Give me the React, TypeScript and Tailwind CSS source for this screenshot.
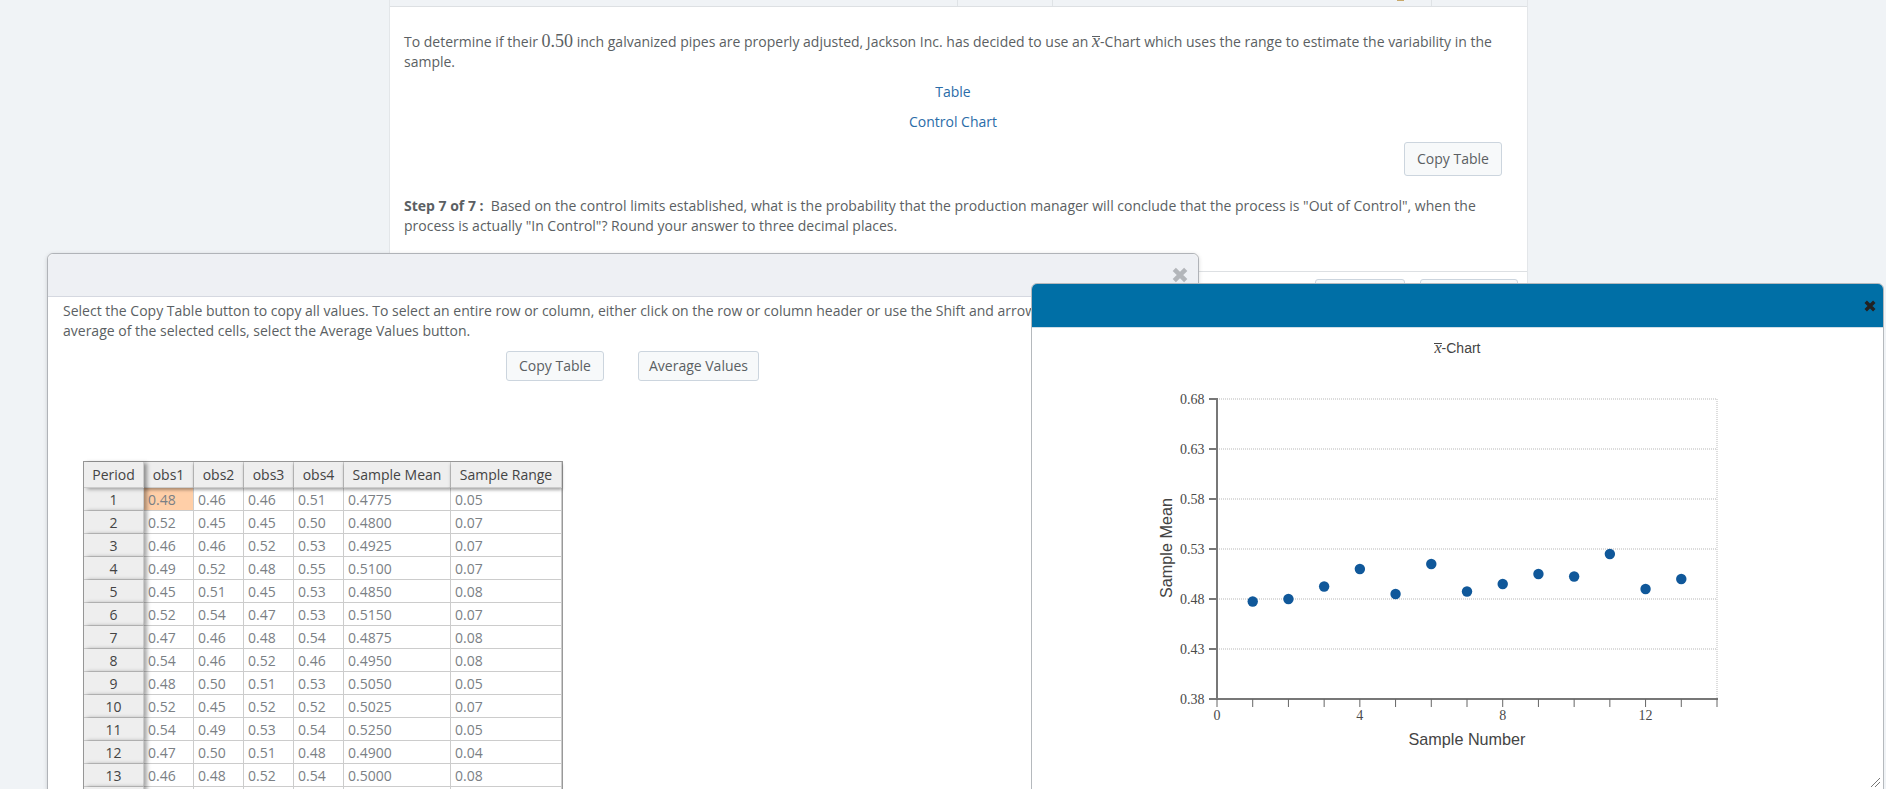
const rows = [
  ["1", "0.48", "0.46", "0.46", "0.51", "0.4775", "0.05"],
  ["2", "0.52", "0.45", "0.45", "0.50", "0.4800", "0.07"],
  ["3", "0.46", "0.46", "0.52", "0.53", "0.4925", "0.07"],
  ["4", "0.49", "0.52", "0.48", "0.55", "0.5100", "0.07"],
  ["5", "0.45", "0.51", "0.45", "0.53", "0.4850", "0.08"],
  ["6", "0.52", "0.54", "0.47", "0.53", "0.5150", "0.07"],
  ["7", "0.47", "0.46", "0.48", "0.54", "0.4875", "0.08"],
  ["8", "0.54", "0.46", "0.52", "0.46", "0.4950", "0.08"],
  ["9", "0.48", "0.50", "0.51", "0.53", "0.5050", "0.05"],
  ["10", "0.52", "0.45", "0.52", "0.52", "0.5025", "0.07"],
  ["11", "0.54", "0.49", "0.53", "0.54", "0.5250", "0.05"],
  ["12", "0.47", "0.50", "0.51", "0.48", "0.4900", "0.04"],
  ["13", "0.46", "0.48", "0.52", "0.54", "0.5000", "0.08"],
  ["", "", "", "", "", "", ""],
];
const headers = ["Period", "obs1", "obs2", "obs3", "obs4", "Sample Mean", "Sample Range"];
const colWidths = [60, 50, 50, 50, 50, 107, 111];

const xPos = (n: number) => 1217 + (n * 500) / 14;
const yPos = (v: number) => 699 - (v - 0.38) * 1000;

function Btn({ children, className }: { children: React.ReactNode; className: string }) {
  return (
    <button className={`flex items-center justify-center rounded-[3px] border border-[#ccd5de] bg-[#f7f9fa] text-[14px] text-[#5b5f63] ${className}`}>
      {children}
    </button>
  );
}

function CloseIcon({ size, color, width }: { size: number; color: string; width: number }) {
  return (
    <svg width={size} height={size} viewBox="0 0 14 14">
      <path d="M2 2L12 12M12 2L2 12" stroke={color} strokeWidth={width} fill="none" />
    </svg>
  );
}

// x-bar, the bar is a border so it sits close to the letter
function XBar({ className }: { className: string }) {
  return <span className={`inline-block border-t border-current font-['Liberation_Serif',serif] italic ${className}`}>x</span>;
}

function DataTable() {
  return (
    <div className="ml-[35px] w-[480px] border-x border-t border-[#999]">
      <table className="table-fixed border-separate border-spacing-0 w-[478px] text-[14px]">
        <colgroup>
          {colWidths.map((w, i) => (
            <col key={i} style={{ width: w }} />
          ))}
        </colgroup>
        <thead>
          <tr>
            {headers.map((h, i) => (
              <th
                key={h}
                className={`relative h-[26px] border-b border-r border-[#ccc] bg-[#eee] p-0 text-center font-normal text-[#444] ${
                  i === 0
                    ? "z-20 shadow-[3px_1px_4px_rgba(0,0,0,0.4)]"
                    : "z-10 shadow-[0_2px_3px_rgba(0,0,0,0.35)]"
                }`}
              >
                {h}
              </th>
            ))}
          </tr>
        </thead>
        <tbody>
          {rows.map((r, ri) => (
            <tr key={ri}>
              {r.map((c, ci) =>
                ci === 0 ? (
                  <td key={ci} className="relative z-10 h-[23px] border-b border-r border-[#ccc] bg-[#eee] p-0 pt-px text-center text-[#444] shadow-[3px_0_4px_rgba(0,0,0,0.35)]">
                    {c}
                  </td>
                ) : (
                  <td
                    key={ci}
                    className={`h-[23px] border-b border-r border-[#ccc] px-1 pb-0 pt-px text-[#7b8085] ${ri === 0 && ci === 1 ? "bg-[#ffcfa8]" : "bg-white"}`}
                  >
                    {c}
                  </td>
                )
              )}
            </tr>
          ))}
        </tbody>
      </table>
    </div>
  );
}

function Chart() {
  const ticks = [0.68, 0.63, 0.58, 0.53, 0.48, 0.43, 0.38];
  const means = rows.slice(0, 13).map((r) => parseFloat(r[5]));
  return (
    <svg viewBox="1032 358 851 440" className="block h-[440px] w-[851px]">
      {ticks.map((t) => (
        <g key={t}>
          {t !== 0.38 && <line x1={1217} x2={1717} y1={yPos(t)} y2={yPos(t)} stroke="#cfcfcf" strokeWidth={1.4} strokeDasharray="1 1" />}
          <line x1={1209} x2={1217} y1={yPos(t)} y2={yPos(t)} stroke="#777" strokeWidth={2} />
          <text x={1204.5} y={yPos(t) + 5} textAnchor="end" fontSize={14} fontFamily="'Liberation Serif', serif" fill="#4a4a4a">
            {t.toFixed(2)}
          </text>
        </g>
      ))}
      <line x1={1717} x2={1717} y1={399} y2={699} stroke="#cfcfcf" strokeWidth={1.4} strokeDasharray="1 1" />
      <line x1={1217} x2={1217} y1={398} y2={700} stroke="#777" strokeWidth={2} />
      <line x1={1216} x2={1718} y1={699} y2={699} stroke="#777" strokeWidth={2} />
      {Array.from({ length: 15 }, (_, i) => (
        <line key={i} x1={xPos(i)} x2={xPos(i)} y1={699} y2={707} stroke="#666" strokeWidth={1} />
      ))}
      {[0, 4, 8, 12].map((n) => (
        <text key={n} x={xPos(n)} y={720} textAnchor="middle" fontSize={14} fontFamily="'Liberation Serif', serif" fill="#4a4a4a">
          {n}
        </text>
      ))}
      {means.map((m, i) => (
        <circle key={i} cx={xPos(i + 1)} cy={yPos(m)} r={5.2} fill="#10589a" />
      ))}
      <text x={1467} y={745} textAnchor="middle" fontSize={16.2} fontFamily="'Liberation Sans', sans-serif" fill="#444">
        Sample Number
      </text>
      <text transform="translate(1172 548) rotate(-90)" textAnchor="middle" fontSize={16.2} fontFamily="'Liberation Sans', sans-serif" fill="#444">
        Sample Mean
      </text>
      <path d="M1871 787L1880 778M1875 787L1880 782" stroke="#777" strokeWidth={1} fill="none" />
    </svg>
  );
}

export default function App() {
  return (
    <div className="relative h-[789px] w-full overflow-hidden bg-[#f0f3f6] font-['Open_Sans',sans-serif] text-[14px] leading-[20px] text-[#5b5f63]">
      {/* Question card */}
      <div className="ml-[389px] h-[789px] w-[1139px] border-x border-[#e3e6e9] bg-white">
        <div className="flex h-[7px] border-b border-[#dde0e3] bg-[#f0f3f6]">
          <div className="w-[568px] border-r border-[#dfe3e6]" />
          <div className="w-[95px] border-r border-[#dfe3e6]" />
          <div className="flex w-[379px] justify-end border-r border-[#dfe3e6] pr-[27px]">
            <div className="h-px w-[7px] bg-[#c9a96a]" />
          </div>
        </div>
        <div className="pl-[14px] pr-[25px] pt-[25px]">
          <p>
            To determine if their <span className="font-['Liberation_Serif',serif] text-[18px] leading-none">0.50</span> inch galvanized pipes are properly adjusted, Jackson Inc. has decided to use an <XBar className="text-[18px] leading-[9px]" />-Chart which uses the range to estimate the variability in the sample.
          </p>
          <div className="mt-[10px] text-center text-[#2a6ca8]">Table</div>
          <div className="mt-[10px] text-center text-[#2a6ca8]">Control Chart</div>
          <div className="mt-[10px] flex justify-end">
            <Btn className="h-[34px] w-[98px]">Copy Table</Btn>
          </div>
          <p className="mt-[20px]">
            <b>Step 7 of 7 :</b>&nbsp; Based on the control limits established, what is the probability that the production manager will conclude that the process is "Out of Control", when the process is actually "In Control"? Round your answer to three decimal places.
          </p>
        </div>
        <div className="mt-[35px] flex justify-end gap-[15px] border-t border-[#dde0e3] pr-[9px] pt-[7px]">
          <Btn className="h-[34px] w-[90px]"> </Btn>
          <Btn className="h-[34px] w-[98px]"> </Btn>
        </div>
      </div>

      {/* Table dialog */}
      <div className="absolute left-[47px] top-[253px] h-[560px] w-[1152px] rounded-t-[6px] border border-[#b0b3b8] bg-white shadow-[0_1px_4px_rgba(0,0,0,0.15)]">
        <div className="flex h-[43px] items-center justify-end rounded-t-[6px] border-b border-[#d5d8e0] bg-[#eef0f4] pr-[10px]">
          <CloseIcon size={16} color="#b3b6ba" width={4} />
        </div>
        <div className="px-[15px] pt-[4px]">
          <p>
            Select the Copy Table button to copy all values. To select an entire row or column, either click on the row or column header or use the Shift and arrow keys. To find the
            <br />
            average of the selected cells, select the Average Values button.
          </p>
        </div>
        <div className="ml-[458px] mt-[10px] flex gap-[34px]">
          <Btn className="h-[30px] w-[98px]">Copy Table</Btn>
          <Btn className="h-[30px] w-[121px]">Average Values</Btn>
        </div>
        <div className="mt-[80px]">
          <DataTable />
        </div>
      </div>

      {/* Chart dialog */}
      <div className="absolute left-[1031px] top-[283px] h-[520px] w-[853px] rounded-t-[6px] border border-[#b5b9bd] bg-white">
        <div className="flex h-[44px] items-center justify-end rounded-t-[5px] border-b border-[#cfdde6] bg-[#006fa6] pr-[7px]">
          <CloseIcon size={12} color="#222" width={4} />
        </div>
        <div className="h-[30px] pt-[10px] text-center font-['Liberation_Sans',sans-serif] text-[14px] text-[#444]">
          <XBar className="text-[16px] leading-[8px]" />-Chart
        </div>
        <Chart />
      </div>
    </div>
  );
}
